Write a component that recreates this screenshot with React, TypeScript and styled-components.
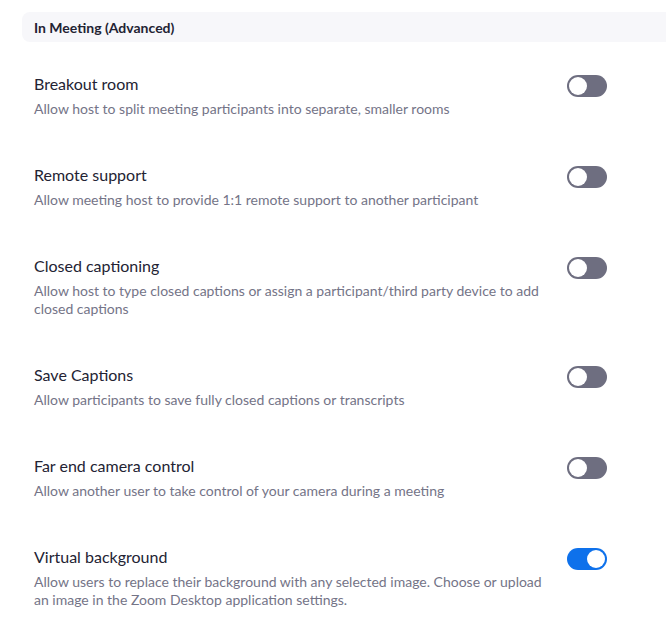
import React from "react";
import styled, { createGlobalStyle } from "styled-components";

const Global = createGlobalStyle`
  html, body { margin: 0; padding: 0; background: #ffffff; }
  body { font-family: Lato, "Open Sans", "Liberation Sans", sans-serif; -webkit-font-smoothing: antialiased; }
`;

const Page = styled.div`
  padding: 12px 0 0 22px;
  width: 644px;
`;

const SectionHeader = styled.div`
  height: 30px;
  display: flex;
  align-items: center;
  padding-left: 12px;
  background: #f7f7fa;
  border-radius: 8px 0 0 8px;
  font-size: 14px;
  font-weight: 700;
  color: #232333;
`;

const List = styled.div`
  display: flex;
  flex-direction: column;
  gap: 45px;
  margin-top: 30px;
  padding: 0 59px 0 12px;
`;

const Row = styled.div`
  display: flex;
  align-items: flex-start;
`;

const TextCol = styled.div`
  flex: 1;
  padding-right: 16px;
`;

const Title = styled.div`
  font-size: 16px;
  line-height: 24px;
  color: #232333;
  margin-bottom: 4px;
`;

const Desc = styled.div`
  font-size: 14px;
  line-height: 18px;
  color: #747487;
`;

const Toggle = styled.div<{ $on: boolean }>`
  position: relative;
  flex: none;
  width: 40px;
  height: 22px;
  margin-top: 3px;
  border-radius: 11px;
  background: ${(p) => (p.$on ? "#0e71eb" : "#6e6e80")};
  &::after {
    content: "";
    position: absolute;
    top: 2px;
    left: ${(p) => (p.$on ? "20px" : "2px")};
    width: 18px;
    height: 18px;
    border-radius: 50%;
    background: #ffffff;
  }
`;

const items = [
  { title: "Breakout room", desc: "Allow host to split meeting participants into separate, smaller rooms", on: false },
  { title: "Remote support", desc: "Allow meeting host to provide 1:1 remote support to another participant", on: false },
  { title: "Closed captioning", desc: "Allow host to type closed captions or assign a participant/third party device to add closed captions", on: false },
  { title: "Save Captions", desc: "Allow participants to save fully closed captions or transcripts", on: false },
  { title: "Far end camera control", desc: "Allow another user to take control of your camera during a meeting", on: false },
  { title: "Virtual background", desc: "Allow users to replace their background with any selected image. Choose or upload an image in the Zoom Desktop application settings.", on: true },
];

export default function App() {
  return (
    <>
      <Global />
      <Page>
        <SectionHeader>In Meeting (Advanced)</SectionHeader>
        <List>
          {items.map((it) => (
            <Row key={it.title}>
              <TextCol>
                <Title>{it.title}</Title>
                <Desc>{it.desc}</Desc>
              </TextCol>
              <Toggle $on={it.on} />
            </Row>
          ))}
        </List>
      </Page>
    </>
  );
}
